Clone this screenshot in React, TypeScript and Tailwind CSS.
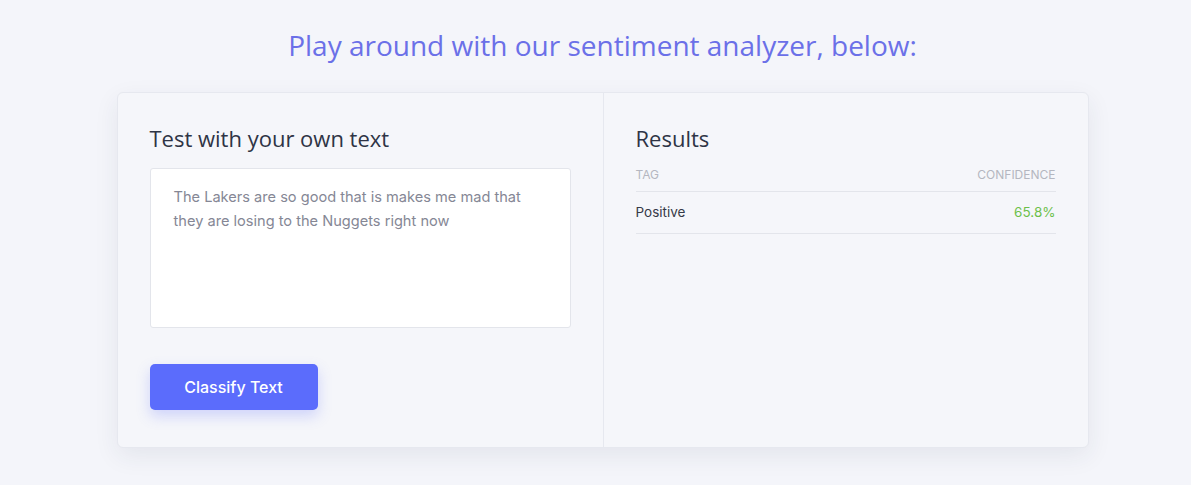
import React from "react";

export default function App() {
  return (
    <div className="min-h-[485px] w-full bg-[#f4f5fa] pt-[26px] pl-[14px]">
      <h1 className="text-center text-[28px] leading-[38px] text-[#6b70e8] font-['Open_Sans',sans-serif]">
        Play around with our sentiment analyzer, below:
      </h1>
      <div className="mx-auto mt-[28px] flex w-[972px] h-[356px] rounded-[6px] border border-[#e6e8ef] bg-[#f5f6fa] shadow-[0_8px_24px_rgba(40,45,80,0.08)] font-['Inter',sans-serif]">
        <div className="w-[486px] border-r border-[#e6e8ef] px-[32px] pt-[31px]">
          <h2 className="text-[22px] leading-[28px] text-[#2e3445] font-['Open_Sans',sans-serif]">Test with your own text</h2>
          <div className="mt-[16px] h-[160px] w-[421px] rounded-[3px] border border-[#e3e5eb] bg-white px-[23px] pt-[16px] text-[14.6px] leading-[24px] text-[#858795]">
            The Lakers are so good that is makes me mad that they are losing to the Nuggets right now
          </div>
          <button className="mt-[36px] h-[46px] w-[168px] rounded-[5px] bg-[#5b6cfc] text-[16px] font-medium text-white shadow-[0_6px_14px_rgba(91,108,252,0.25)]">
            Classify Text
          </button>
        </div>
        <div className="flex-1 px-[32px] pt-[31px]">
          <h2 className="text-[22px] leading-[28px] text-[#2e3445] font-['Open_Sans',sans-serif]">Results</h2>
          <div className="mt-[15px] flex justify-between border-b border-[#e3e5eb] pb-[8px] text-[12px] leading-[16px] uppercase text-[#b4b6c0]">
            <span>Tag</span>
            <span>Confidence</span>
          </div>
          <div className="flex justify-between border-b border-[#e3e5eb] py-[11px] text-[13.5px] leading-[19px]">
            <span className="text-[#363a48]">Positive</span>
            <span className="text-[#6cc04a]">65.8%</span>
          </div>
        </div>
      </div>
    </div>
  );
}
